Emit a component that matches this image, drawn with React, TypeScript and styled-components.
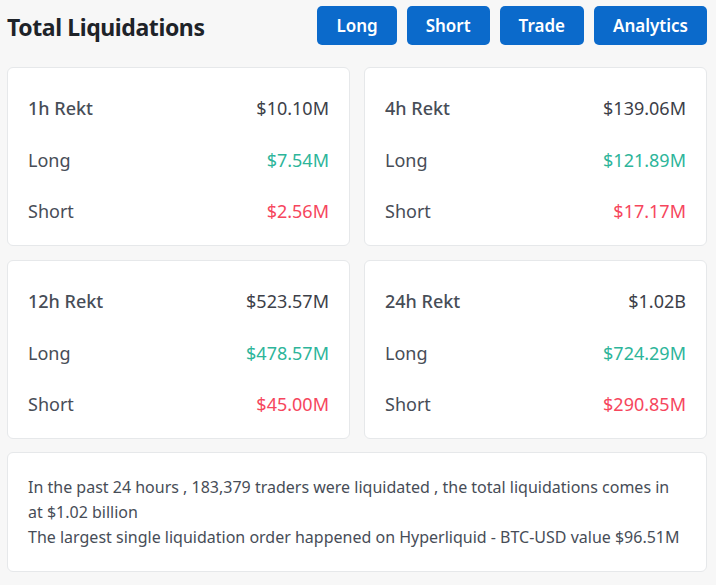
import { FC } from "react"
import styled, { createGlobalStyle } from "styled-components"

const GlobalStyle = createGlobalStyle`
  html, body {
    margin: 0;
    padding: 0;
    background: #f7f7f7;
  }
  body {
    font-family: "Noto Sans", "Open Sans", Arial, sans-serif;
    color: #1e2329;
  }
`

const Page = styled.div`
  padding: 6px 9px 0 7px;
  display: flex;
  flex-direction: column;
  gap: 13px;
`

const Header = styled.div`
  display: flex;
  align-items: center;
  justify-content: space-between;
  margin-bottom: 9px;
`

const Title = styled.h1`
  margin: 2px 0 0;
  font-size: 23px;
  font-weight: 700;
  color: #1e2329;
  letter-spacing: -0.4px;
`

const Buttons = styled.div`
  display: flex;
  gap: 10px;
`

const NavButton = styled.button`
  height: 39px;
  padding: 0 19px;
  border: none;
  border-radius: 5px;
  background: #0b6acb;
  color: #fff;
  font-family: inherit;
  font-size: 17px;
  font-weight: 600;
  cursor: pointer;
`

const Grid = styled.div`
  display: grid;
  grid-template-columns: 1fr 1fr;
  gap: 14px;
`

const Card = styled.div`
  background: #fff;
  border: 1px solid #e6e8ea;
  border-radius: 6px;
  box-sizing: border-box;
`

const StatCard = styled(Card)`
  padding: 26px 20px 20px;
  display: flex;
  flex-direction: column;
  gap: 23.5px;
`

const Row = styled.div`
  display: flex;
  justify-content: space-between;
  align-items: center;
  line-height: 28px;
  font-size: 18px;
`

const Label = styled.span<{ $strong?: boolean }>`
  color: #474d57;
  font-weight: ${(p) => (p.$strong ? 500 : 400)};
`

const Value = styled.span<{ $tone?: "up" | "down" }>`
  color: ${(p) =>
    p.$tone === "up" ? "#2db59a" : p.$tone === "down" ? "#f6465d" : "#3c4048"};
`

const Summary = styled(Card)`
  padding: 22px 24px 21px 20px;
  font-size: 16px;
  line-height: 25px;
  color: #474d57;
`

const NextCard = styled(Card)`
  height: 40px;
`

type Stat = {
  period: string
  total: string
  long: string
  short: string
}

const stats: Stat[] = [
  { period: "1h", total: "$10.10M", long: "$7.54M", short: "$2.56M" },
  { period: "4h", total: "$139.06M", long: "$121.89M", short: "$17.17M" },
  { period: "12h", total: "$523.57M", long: "$478.57M", short: "$45.00M" },
  { period: "24h", total: "$1.02B", long: "$724.29M", short: "$290.85M" },
]

const StatBlock: FC<{ stat: Stat }> = ({ stat }) => (
  <StatCard>
    <Row>
      <Label $strong>{stat.period} Rekt</Label>
      <Value>{stat.total}</Value>
    </Row>
    <Row>
      <Label>Long</Label>
      <Value $tone="up">{stat.long}</Value>
    </Row>
    <Row>
      <Label>Short</Label>
      <Value $tone="down">{stat.short}</Value>
    </Row>
  </StatCard>
)

const App: FC = () => {
  return (
    <>
      <GlobalStyle />
      <Page>
        <Header>
          <Title>Total Liquidations</Title>
          <Buttons>
            <NavButton>Long</NavButton>
            <NavButton>Short</NavButton>
            <NavButton>Trade</NavButton>
            <NavButton>Analytics</NavButton>
          </Buttons>
        </Header>
        <Grid>
          {stats.map((s) => (
            <StatBlock key={s.period} stat={s} />
          ))}
        </Grid>
        <Summary>
          In the past 24 hours , 183,379 traders were liquidated , the total
          liquidations comes in at $1.02 billion
          <br />
          The largest single liquidation order happened on Hyperliquid - BTC-USD
          value $96.51M
        </Summary>
        <NextCard />
      </Page>
    </>
  )
}

export default App
